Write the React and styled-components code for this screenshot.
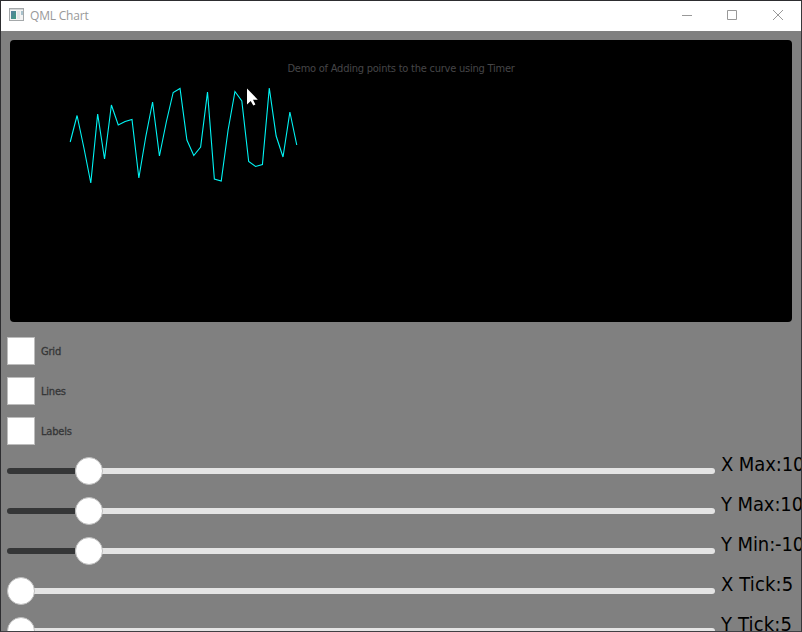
import React from "react";
import styled, { createGlobalStyle } from "styled-components";

const Global = createGlobalStyle`
  * { box-sizing: border-box; }
  body { margin: 0; overflow: hidden; }
`;

const Window = styled.div`
  width: 802px;
  height: 632px;
  display: flex;
  flex-direction: column;
  overflow: hidden;
  background: #808080;
  border: 1px solid #2d2d30;
  border-bottom-color: #404044;
  border-right-color: #37373a;
  font-family: "DejaVu Sans Condensed", "DejaVu Sans", sans-serif;
`;

const TitleBar = styled.header`
  height: 30px;
  flex: none;
  display: flex;
  align-items: center;
  background: #fff;
  padding-left: 8px;
`;

const IconSlot = styled.span`
  display: flex;
  padding-bottom: 3px;
`;

const Title = styled.span`
  flex: 1;
  margin-left: 6px;
  color: #999;
  font: 12px/18px "Open Sans", "Noto Sans", sans-serif;
  letter-spacing: -0.2px;
`;

const CaptionButton = styled.div`
  width: 46px;
  height: 30px;
  padding-bottom: 2px;
  display: flex;
  align-items: center;
  justify-content: center;
`;

const ChartPanel = styled.section`
  position: relative;
  width: 782px;
  height: 282px;
  flex: none;
  margin: 9px 0 0 9px;
  border-radius: 4px;
  background: #000;
`;

const ChartTitle = styled.div`
  padding-top: 21px;
  text-align: center;
  color: #464648;
  font: 11px/16px "DejaVu Sans Condensed", "DejaVu Sans", sans-serif;
  letter-spacing: -0.23px;
`;

const Plot = styled.svg`
  position: absolute;
  inset: 0;
`;

const Controls = styled.section`
  display: flex;
  flex-direction: column;
  gap: 12px;
  padding: 15px 0 0 6px;
`;

const CheckRow = styled.label`
  display: flex;
  align-items: center;
  gap: 6px;
  height: 28px;
  color: #353637;
  font-size: 11px;
  letter-spacing: -0.2px;
  -webkit-text-stroke: 0.3px #353637;
`;

const CheckText = styled.span`
  padding-top: 1px;
`;

const Box = styled.span`
  width: 28px;
  height: 28px;
  background: #fff;
  border: 1px solid #bdbdbd;
`;

const SliderRow = styled.div`
  display: flex;
  align-items: center;
  gap: 6px;
  height: 28px;
  flex: none;
`;

const Slider = styled.div`
  width: 708px;
  height: 28px;
  flex: none;
  display: flex;
  align-items: center;
`;

const Fill = styled.div`
  width: ${(p) => p.$width}px;
  height: 6px;
  flex: none;
  border-radius: 3px 0 0 3px;
  background: #353637;
`;

const Rest = styled.div`
  height: 6px;
  flex: 1;
  margin-left: -1px;
  border-radius: 0 3px 3px 0;
  background: #e4e4e4;
`;

const Handle = styled.div`
  width: 28px;
  height: 28px;
  flex: none;
  z-index: 1;
  border-radius: 50%;
  border: 1px solid #bdbdbd;
  background: #fff;
`;

const Value = styled.span`
  height: 40px;
  line-height: 26px;
  font-size: 20px;
  letter-spacing: ${(p) => p.$spacing}px;
  white-space: nowrap;
  color: #000;
`;

const levels = [
  142, 115.5, 148, 183, 114, 159, 105, 125, 121.5, 119.5, 178, 137, 102, 156,
  122, 92.5, 88.5, 140, 155.5, 147, 92, 179, 181, 130, 91.5, 101, 161.5, 166.5,
  164.5, 88, 136, 157, 112, 145,
];
const curve = levels
  .map((y, i) => `${(60.2 + i * 6.865).toFixed(2)},${y - 40}`)
  .join(" ");

const sliders = [
  { label: "X Max:100", offset: 67.5, spacing: -0.1 },
  { label: "Y Max:100", offset: 67.5, spacing: -0.1 },
  { label: "Y Min:-100", offset: 67.5, spacing: -0.1 },
  { label: "X Tick:5", offset: 0, spacing: 0.15 },
  { label: "Y Tick:5", offset: 0, spacing: 0.15 },
];

function AppIcon() {
  return (
    <svg width="15" height="13" viewBox="0 0 15 13" shapeRendering="crispEdges">
      <defs>
        <linearGradient id="screen" x1="0" y1="0" x2="1" y2="1">
          <stop offset="0" stopColor="#557ea0" />
          <stop offset="1" stopColor="#3e9b80" />
        </linearGradient>
      </defs>
      <rect x="0.5" y="0.5" width="14" height="12" fill="#f4f4f4" stroke="#a4a8aa" />
      <rect x="1" y="1" width="13" height="1" fill="#d2d5d6" />
      <rect x="2" y="3" width="5" height="8" fill="url(#screen)" />
      <rect x="8" y="3" width="3" height="8" fill="#e2e6e8" />
      <rect x="12" y="3" width="2" height="4" fill="#a9c2cc" />
    </svg>
  );
}

export default function App() {
  return (
    <>
      <Global />
      <Window>
        <TitleBar>
          <IconSlot>
            <AppIcon />
          </IconSlot>
          <Title>QML Chart</Title>
          <CaptionButton>
            <svg width="12" height="10" stroke="#999" fill="none">
              <path d="M2 5.5H12" />
            </svg>
          </CaptionButton>
          <CaptionButton>
            <svg width="10" height="10" stroke="#999" fill="none">
              <path d="M.5 .5H9.5V9.5H.5Z" />
            </svg>
          </CaptionButton>
          <CaptionButton>
            <svg width="10" height="10" stroke="#999" fill="none">
              <path d="M0 0L10 10M10 0L0 10" />
            </svg>
          </CaptionButton>
        </TitleBar>
        <ChartPanel>
          <ChartTitle>Demo of Adding points to the curve using Timer</ChartTitle>
          <Plot width="782" height="282">
            <polyline points={curve} fill="none" stroke="#00f5f5" strokeWidth="1.1" />
            <path
              d="M237 48.5V64.5L240.7 61L243.3 65.5L245.4 64.5L243 59.7H247.8Z"
              fill="#fff"
            />
          </Plot>
        </ChartPanel>
        <Controls>
          {["Grid", "Lines", "Labels"].map((name) => (
            <CheckRow key={name}>
              <Box />
              <CheckText>{name}</CheckText>
            </CheckRow>
          ))}
          {sliders.map((s) => (
            <SliderRow key={s.label}>
              <Slider>
                {s.offset > 0 && <Fill $width={s.offset} />}
                <Handle />
                <Rest />
              </Slider>
              <Value $spacing={s.spacing}>{s.label}</Value>
            </SliderRow>
          ))}
        </Controls>
      </Window>
    </>
  );
}
